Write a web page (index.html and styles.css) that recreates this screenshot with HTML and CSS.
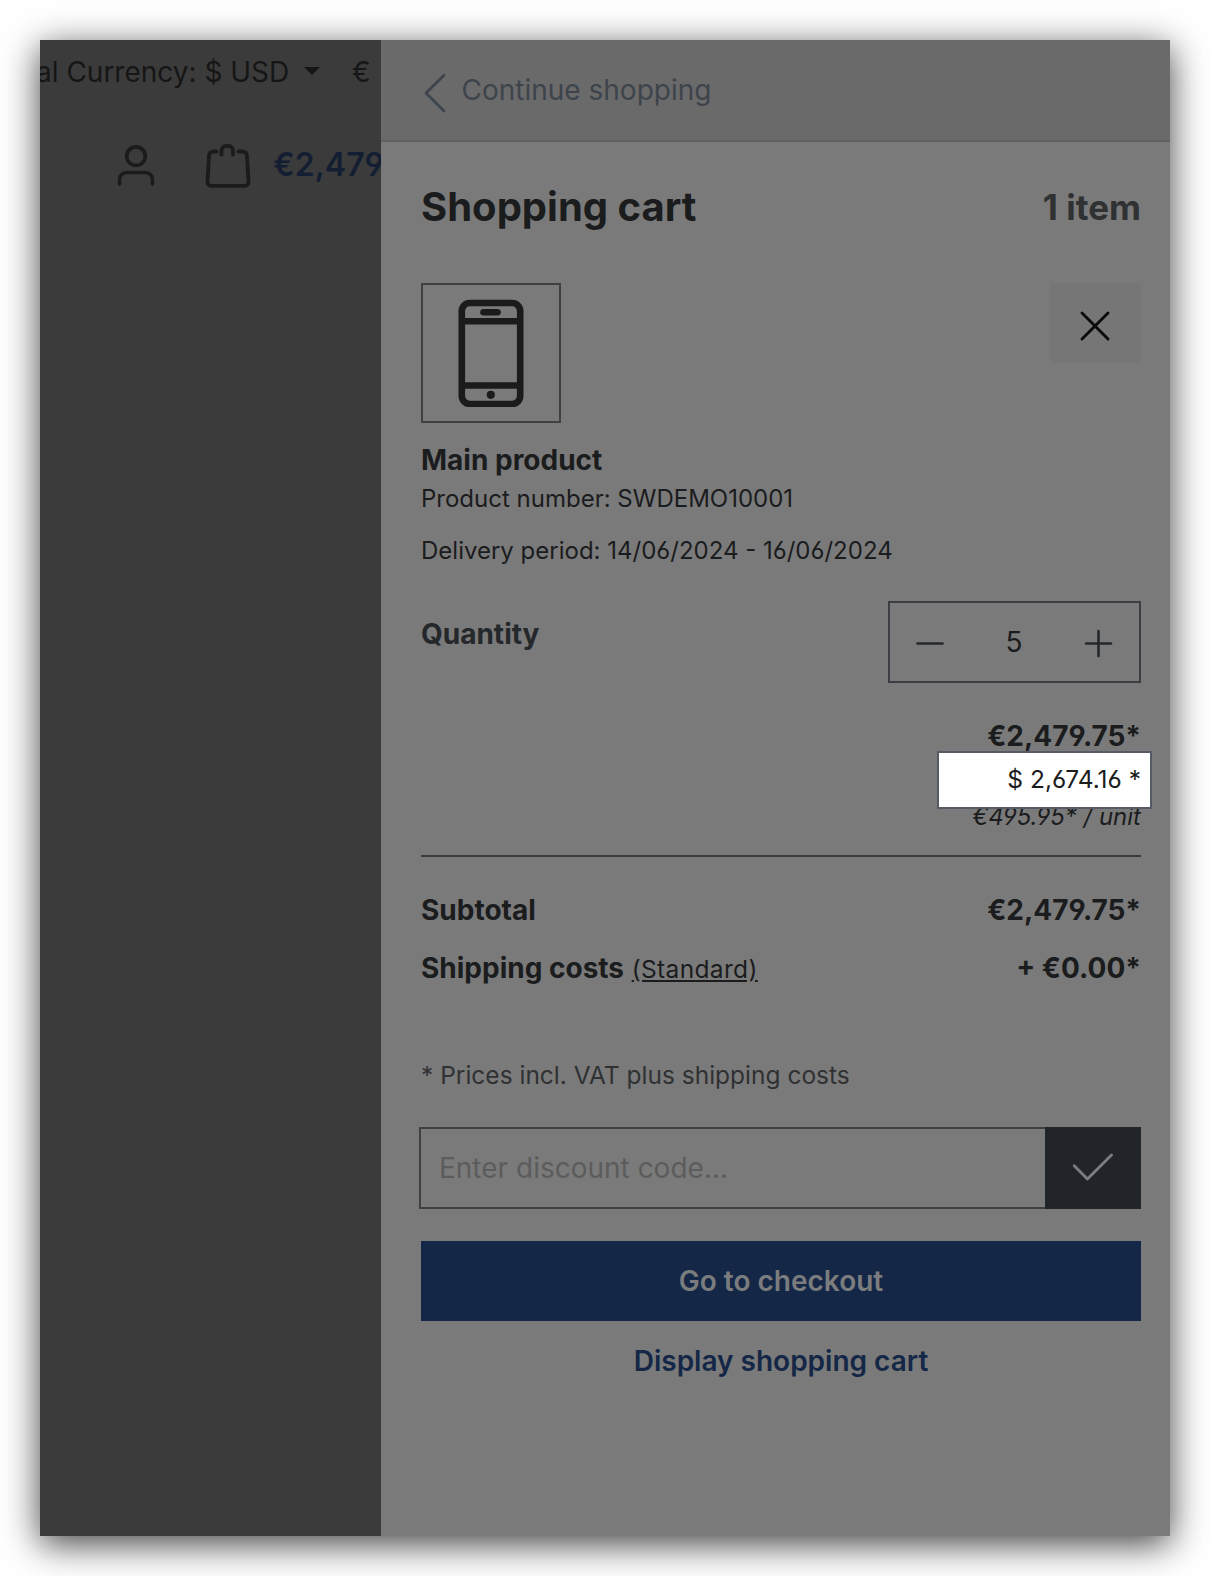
FILE: index.html
```html
<!DOCTYPE html>
<html lang="en">
<head>
<meta charset="utf-8">
<title>Shopping cart</title>
<link rel="stylesheet" href="styles.css">
</head>
<body>
<div class="window">
  <div class="shop">
    <div class="topbar"><span class="currency">al Currency: $ USD</span><i class="caret"></i><span class="euro">€</span></div>
    <div class="actions">
      <svg class="user" width="40" height="44" viewBox="0 0 40 44" fill="none" stroke="#1a1b1b" stroke-width="3.6" stroke-linecap="round"><circle cx="20" cy="12.200" r="9.300"/><path d="M3.500 40v-4.500a7 7 0 0 1 7-7h19a7 7 0 0 1 7 7v4.500"/></svg>
      <svg class="bag" width="46" height="46" viewBox="0 0 46 46" fill="none" stroke="#1a1b1b" stroke-width="3.800" stroke-linecap="round" stroke-linejoin="round"><path d="M11.500 8.500H8.500a4.500 4.500 0 0 0-4.500 4.300L2.500 39a3.600 3.600 0 0 0 3.600 3.800h33.800a3.600 3.600 0 0 0 3.600-3.800L42 12.800A4.500 4.500 0 0 0 37.500 8.500h-4M16.500 11.500V7.500a4.500 4.500 0 0 1 4.500-4.500h2.500a4.500 4.500 0 0 1 4.500 4.500v4"/></svg>
      <span class="total">€2,479</span>
    </div>
  </div>
  <aside class="cart">
    <header class="back">
      <svg width="26" height="42" viewBox="0 0 26 42" fill="none" stroke="#3e444b" stroke-width="2.800" stroke-linecap="round" stroke-linejoin="round"><path d="M22 3.200L4 21l18 18"/></svg>
      <span class="back-text">Continue shopping</span>
    </header>
    <div class="body">
      <div class="row title-row"><h1 class="title">Shopping cart</h1><span class="count">1 item</span></div>
      <div class="row product">
        <div class="thumb"><svg width="66" height="108" viewBox="0 0 66 108" fill="none" stroke="#1b1b1b" stroke-width="6.600"><rect x="3.800" y="4" width="58.400" height="101" rx="8"/><path d="M4 22.200h58M4 86.500h58"/><path d="M25.500 13.200h14" stroke-linecap="round"/><circle cx="32.800" cy="95.800" r="4.100" fill="#1b1b1b" stroke="none"/></svg></div>
        <div class="remove"><svg width="32" height="32" viewBox="0 0 32 32" fill="none" stroke="#0b0b0b" stroke-width="2.900" stroke-linecap="round"><path d="M3 3l26 26M29 3L3 29"/></svg></div>
      </div>
      <div class="name">Main product</div>
      <div class="meta number">Product number: SWDEMO10001</div>
      <div class="meta delivery">Delivery period: 14/06/2024 - 16/06/2024</div>
      <div class="row quantity">
        <span class="quantity-label">Quantity</span>
        <div class="stepper">
          <svg width="30" height="30" viewBox="0 0 30 30" stroke="#25282b" stroke-width="2.600" stroke-linecap="round"><path d="M2.500 15.500h25"/></svg>
          <span class="quantity-value">5</span>
          <svg width="30" height="30" viewBox="0 0 30 30" stroke="#25282b" stroke-width="2.600" stroke-linecap="round"><path d="M3 15.500h25M15.500 3v25"/></svg>
        </div>
      </div>
      <div class="prices">
        <span class="amount">€2,479.75*</span>
        <div class="callout"><span>$ 2,674.16 *</span></div>
        <em class="unit">€495.95* / unit</em>
      </div>
      <div class="row sum"><span class="strong">Subtotal</span><span class="amount">€2,479.75*</span></div>
      <div class="row sum shipping"><span class="strong">Shipping costs <a class="standard">(Standard)</a></span><span class="amount">+ €0.00*</span></div>
      <div class="vat">* Prices incl. VAT plus shipping costs</div>
      <div class="promo">
        <div class="code">Enter discount code...</div>
        <div class="apply"><svg width="44" height="32" viewBox="0 0 44 32" fill="none" stroke="#7b7c7d" stroke-width="2.900" stroke-linecap="round" stroke-linejoin="round"><path d="M3.200 14.800L16.400 28 40.500 4"/></svg></div>
      </div>
      <div class="checkout">Go to checkout</div>
      <div class="display">Display shopping cart</div>
    </div>
  </aside>
</div>
</body>
</html>
```

FILE: styles.css
```css
* { box-sizing: border-box; }
body { margin: 0; padding: 40px; height: 1576px; background: #fff; font-family: Inter, "Liberation Sans", sans-serif; font-feature-settings: "cv03", "cv04"; font-size: 28px; line-height: 42px; color: #1b1c1d; overflow: hidden; }
svg { display: block; flex: none; }
.window { display: flex; width: 1130px; height: 1496px; box-shadow: 0 8px 34px rgba(0,0,0,.75); }
.shop { width: 341px; background: #3b3b3b; overflow: hidden; color: #161616; white-space: nowrap; }
.topbar { display: flex; align-items: center; height: 42px; margin-top: 11px; }
.currency { width: 248px; margin-left: -4px; }
.caret { margin-left: 20px; margin-top: -2px; border: 8px solid transparent; border-top-color: #161616; border-bottom: 0; }
.euro { margin-left: 32px; }
.actions { display: flex; align-items: center; margin-top: 49px; padding-left: 76px; height: 48px; }
.bag { margin-left: 49px; }
.total { margin: -2px 0 0 22px; font-size: 32px; font-weight: 600; color: #141e33; }
.cart { width: 789px; background: #7a7a7a; }
.back { display: flex; align-items: flex-start; height: 102px; padding: 32px 0 0 41px; background: #6a6a6a; border-bottom: 2px solid #616161; color: #3e444b; }
.back-text { margin: -3px 0 0 13.5px; }
.body { padding: 35px 29px 0 40px; }
.row { display: flex; justify-content: space-between; }
.title-row { height: 60px; line-height: 60px; }
.title { margin: 0; font-size: 40px; font-weight: 700; }
.count { font-size: 35px; font-weight: 700; color: #303132; }
.product { margin-top: 46px; }
.thumb { display: flex; align-items: center; justify-content: center; width: 140px; height: 140px; border: 2px solid #3e4044; }
.remove { display: flex; align-items: center; justify-content: center; width: 91px; height: 80px; padding: 6px 2px 0 0; background: #767676; }
.name { margin-top: 17px; font-weight: 700; line-height: 41px; }
.meta { font-size: 24px; line-height: 36px; }
.delivery { margin-top: 16px; }
.quantity { margin-top: 32px; }
.quantity-label { padding-top: 12px; font-weight: 700; color: #25282b; }
.stepper { display: flex; align-items: center; justify-content: space-between; width: 253px; height: 82px; padding: 2px 26px 0 25px; border: 2px solid #3a3d42; }
.quantity-value { margin-top: -2px; }
.prices { display: flex; flex-direction: column; align-items: flex-end; margin-top: 32px; padding-bottom: 20px; border-bottom: 2px solid #3a3b3e; }
.amount { font-weight: 700; }
.callout { position: relative; z-index: 1; width: 215px; height: 58px; margin: -6px -11px -10px 0; padding-right: 9px; border: 2px solid #565b66; background: #fff; text-align: right; font-size: 24.5px; line-height: 52px; }
.unit { font-size: 24px; line-height: 36px; }
.sum { margin-top: 32px; }
.shipping { margin-top: 16px; }
.strong { font-weight: 700; }
.standard { font-size: 24.5px; font-weight: 400; letter-spacing: .35px; margin-left: 1px; text-decoration: underline; }
.vat { margin-top: 67px; font-size: 24.5px; line-height: 36px; color: #303133; }
.promo { display: flex; height: 82px; margin: 34px 0 0 -2px; }
.code { flex: 1; padding-left: 18px; border: 2px solid #3e4044; border-right: 0; line-height: 78px; color: #5c5c5c; }
.apply { display: flex; align-items: center; justify-content: center; width: 96px; padding-bottom: 2px; background: #212428; }
.checkout { height: 80px; margin-top: 32px; background: #142747; color: #7b7c7e; font-weight: 600; line-height: 80px; text-align: center; }
.display { font-weight: 600; line-height: 80px; text-align: center; color: #142747; }
```
